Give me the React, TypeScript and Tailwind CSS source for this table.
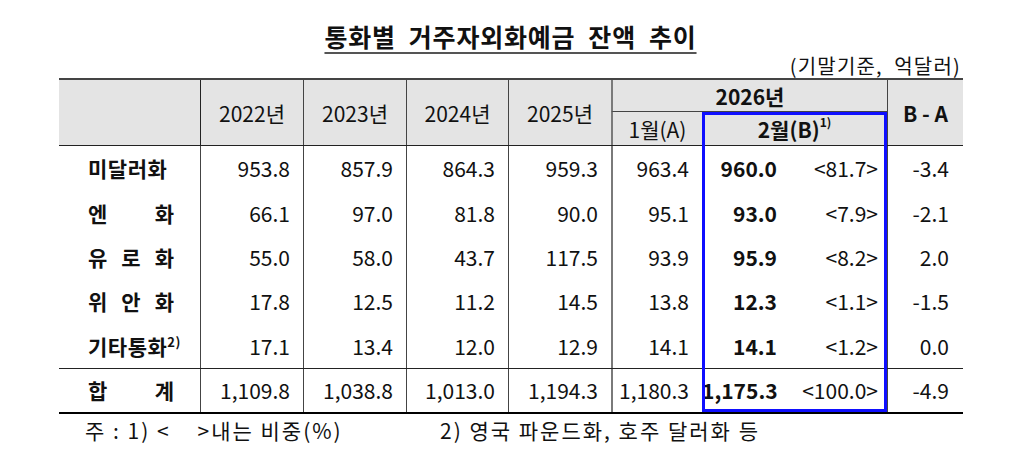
import React from 'react';

const FONT = { fontFamily: '"Noto Sans CJK KR", "Noto Sans", sans-serif' };
const COLS = 'grid grid-cols-[141px_103px_103px_102px_103px_91px_185px_76px]';

interface Row {
  label: string;
  spread?: boolean;
  note?: string;
  values: string[];
  jan: string;
  feb: string;
  share: string;
  diff: string;
}

const rows: Row[] = [
  { label: '미달러화', values: ['953.8', '857.9', '864.3', '959.3'], jan: '963.4', feb: '960.0', share: '<81.7>', diff: '-3.4' },
  { label: '엔화', spread: true, values: ['66.1', '97.0', '81.8', '90.0'], jan: '95.1', feb: '93.0', share: '<7.9>', diff: '-2.1' },
  { label: '유로화', spread: true, values: ['55.0', '58.0', '43.7', '117.5'], jan: '93.9', feb: '95.9', share: '<8.2>', diff: '2.0' },
  { label: '위안화', spread: true, values: ['17.8', '12.5', '11.2', '14.5'], jan: '13.8', feb: '12.3', share: '<1.1>', diff: '-1.5' },
  { label: '기타통화', note: '2)', values: ['17.1', '13.4', '12.0', '12.9'], jan: '14.1', feb: '14.1', share: '<1.2>', diff: '0.0' },
];

const total: Row = {
  label: '합계',
  spread: true,
  values: ['1,109.8', '1,038.8', '1,013.0', '1,194.3'],
  jan: '1,180.3',
  feb: '1,175.3',
  share: '<100.0>',
  diff: '-4.9',
};

function Label({ row }: { row: Row }) {
  return (
    <div className="flex items-center pl-[29px]">
      {row.spread ? (
        <div className="flex w-[86px] justify-between font-bold">
          {row.label.split('').map((ch, i) => (
            <span key={i}>{ch}</span>
          ))}
        </div>
      ) : (
        <div className="font-bold tracking-[0.5px]">
          {row.label}
          {row.note && (
            <span className="relative -top-[8px] text-[13px] leading-none font-bold">{row.note}</span>
          )}
        </div>
      )}
    </div>
  );
}

function DataRow({ row, h }: { row: Row; h: string }) {
  const cell = 'flex items-center justify-end pr-[13px] border-l border-[#444]';
  return (
    <div className={`${COLS} ${h}`}>
      <Label row={row} />
      {row.values.map((v, i) => (
        <div key={i} className={`${cell} ${i === 0 ? 'border-[#222]' : ''}`}>
          {v}
        </div>
      ))}
      <div className="flex items-center justify-end pr-[13px] border-l-2 border-[#7a7a7a]">{row.jan}</div>
      <div className="flex items-center">
        <span className="w-[75px] text-right font-bold">{row.feb}</span>
        <span className="flex-1 text-right pr-[9px]">{row.share}</span>
      </div>
      <div className="flex items-center justify-end pr-[14px] border-l border-[#444]">{row.diff}</div>
    </div>
  );
}

export default function App() {
  return (
    <div className="w-[1021px] h-[454px] bg-white text-[#111] overflow-hidden" style={FONT}>
      <div className="flex flex-col items-center pt-[20px]">
        <h1 className="h-[32px] text-[25px] leading-[32px] font-bold tracking-[0.8px] whitespace-pre underline decoration-2 decoration-[#555] underline-offset-[5px]">
          {'통화별  거주자외화예금  잔액  추이'}
        </h1>
      </div>
      <div className="w-[961px] text-right text-[20px] leading-[24px] tracking-[1.2px] mt-[2px] whitespace-pre">
        {'(기말기준,  억달러)'}
      </div>

      <div className="relative ml-[59px] w-[904px] text-[21px] leading-[28px] border-t-2 border-[#444] border-b-2 border-b-black">
        {/* header */}
        <div className={`${COLS} grid-rows-[32px_33px] bg-[#e4e4e4] border-b border-[#222]`}>
          <div className="row-span-2" />
          {['2022년', '2023년', '2024년', '2025년'].map((y, i) => (
            <div
              key={y}
              className={`row-span-2 flex items-center justify-center border-l ${i === 0 ? 'border-[#222]' : 'border-[#444]'}`}
            >
              {y}
            </div>
          ))}
          <div className="col-span-2 flex items-center justify-center font-bold border-l-2 border-[#7a7a7a] border-b border-b-[#444]">
            2026년
          </div>
          <div className="row-span-2 flex items-center justify-center font-bold border-l border-[#444]">B - A</div>
          <div className="flex items-center justify-center border-l-2 border-[#7a7a7a]">1월(A)</div>
          <div className="flex items-center justify-center font-bold">
            2월(B)
            <span className="relative -top-[7px] text-[12px] leading-none font-bold">1)</span>
          </div>
        </div>

        {/* body */}
        {rows.map((r) => (
          <DataRow key={r.label} row={r} h="h-[44.4px]" />
        ))}
        <div className="border-t border-[#222]">
          <DataRow row={total} h="h-[43px]" />
        </div>

        {/* highlighted column */}
        <div className="absolute pointer-events-none left-[643px] top-[32px] w-[185px] h-[300px] border-[3px] border-[#0f0fff]" />
      </div>

      <div className="flex text-[21px] leading-[26px] mt-[3px] whitespace-pre tracking-[2px]">
        <span className="ml-[85px] w-[355px]">{'주 : 1) <    >내는 비중(%)'}</span>
        <span>{'2) 영국 파운드화, 호주 달러화 등'}</span>
      </div>
    </div>
  );
}
